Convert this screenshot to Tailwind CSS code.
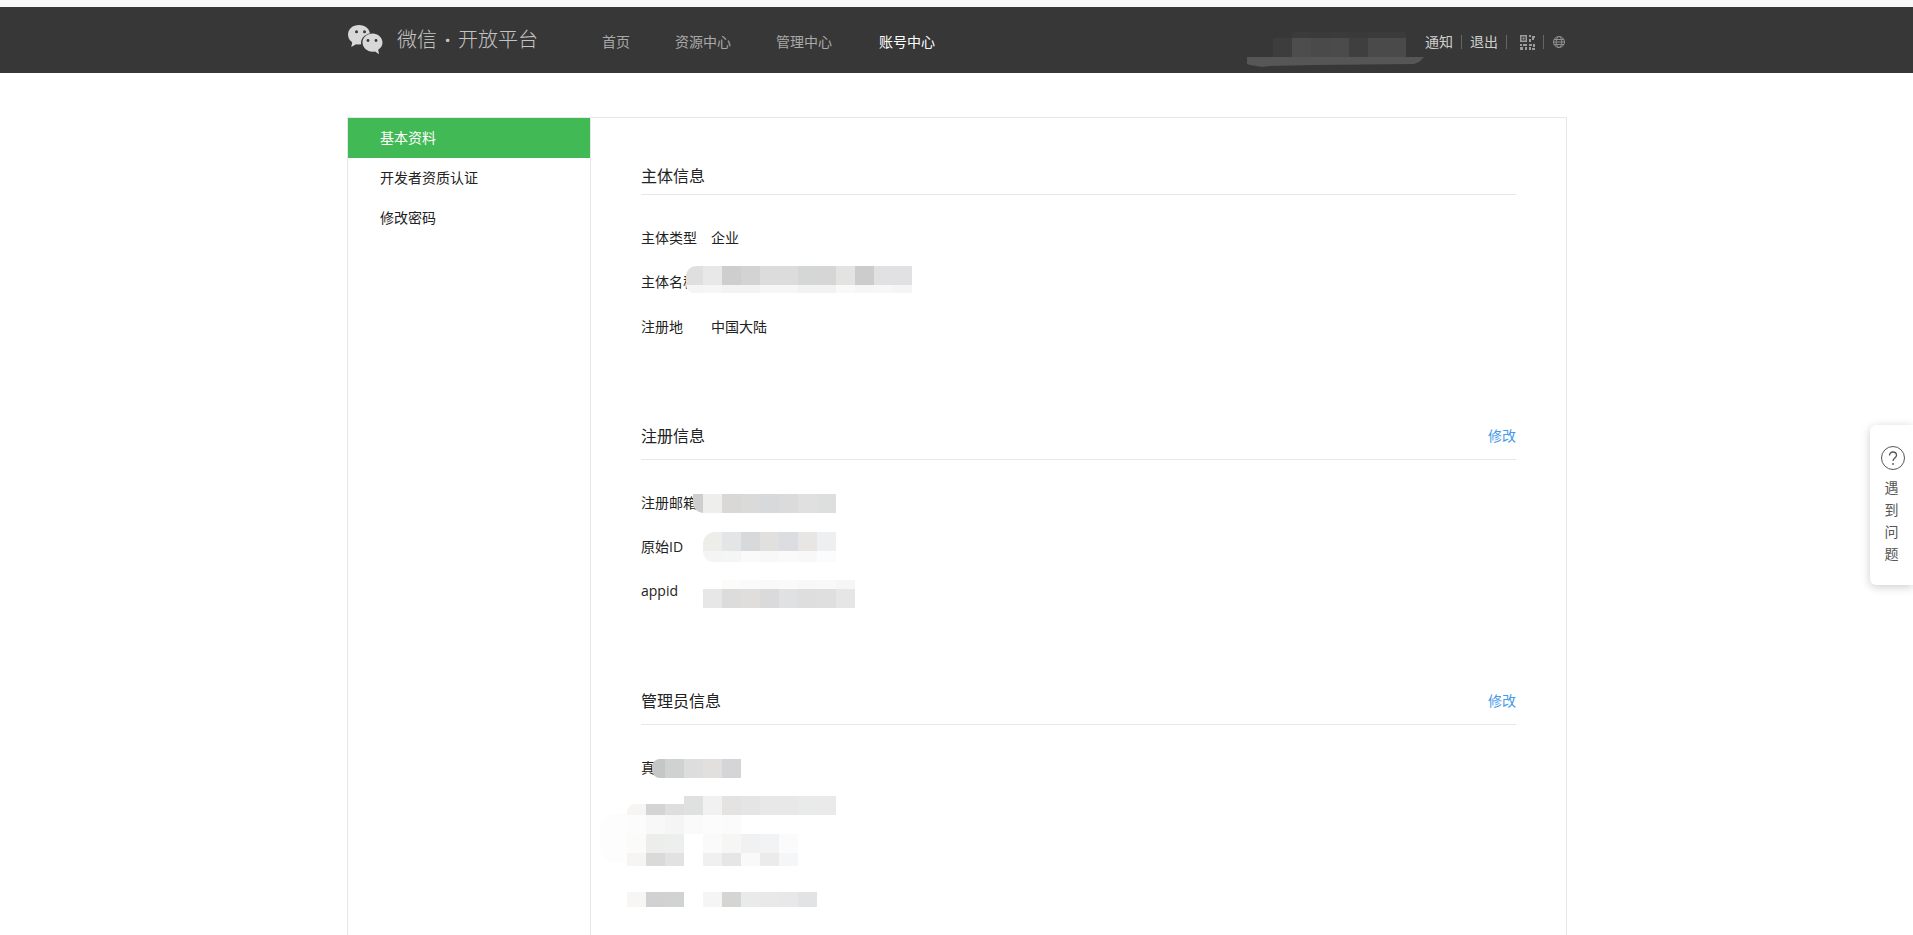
<!DOCTYPE html>
<html lang="zh-CN">

<head>
    <meta charset="UTF-8">
    <title>微信开放平台 - 基本资料</title>
    <script src="https://cdn.jsdelivr.net/npm/@tailwindcss/browser@4"></script>
</head>

<body class="relative h-[935px] overflow-hidden bg-white text-sm text-[#222] font-['Open_Sans','Noto_Sans_CJK_SC',sans-serif]">
    <div class="h-[7px] bg-[#f8f8f8]"></div>

    <!-- top bar -->
    <header class="relative h-[66px] bg-[#373737]">
        <div class="ml-[347px] w-[1220px] h-full flex items-center">
            <svg class="w-[36px] h-[30px]" viewBox="0 0 36 30">
                <path fill="#d8d8d8" d="M12 0C5.600 0 1 4.200 1 9.600c0 3.200 1.600 5.900 4.200 7.700L4.300 22l4.800-2.800c1 .2 1.900.3 2.900.3 6.200 0 11-4.300 11-9.900S18.200 0 12 0z" />
                <circle cx="9.500" cy="6.800" r="1.500" fill="#373737" />
                <circle cx="17.500" cy="6.800" r="1.500" fill="#373737" />
                <ellipse cx="25.500" cy="18" rx="11.500" ry="10" fill="#373737" />
                <path fill="#d8d8d8" d="M25.500 8.500c-5.500 0-10 4-10 9.100s4.500 9.100 10 9.100c.9 0 1.800-.1 2.600-.3l3.900 2.800-.8-4.400c2.600-1.600 4.300-4.200 4.300-7.200 0-5.100-4.500-9.100-10-9.100z" />
                <circle cx="21" cy="15.500" r="1.400" fill="#373737" />
                <circle cx="29" cy="15.500" r="1.400" fill="#373737" />
            </svg>
            <div class="ml-[14px] flex text-[20px] leading-[28px] text-[#c4c4c4] font-light">
                <span>微信</span>
                <span class="w-[21px] text-center font-bold">·</span>
                <span>开放平台</span>
            </div>
            <nav class="ml-[64px] mt-[3px] flex gap-[45px] text-[#a9a9a9]">
                <a>首页</a>
                <a>资源中心</a>
                <a>管理中心</a>
                <a class="ml-[2px] text-white">账号中心</a>
            </nav>
            <div class="ml-auto mt-[4px] pr-[2px] flex items-center text-[#cfcfcf]">
                <a>通知</a>
                <span class="mx-[8px] w-px h-[14px] bg-[#666]"></span>
                <a>退出</a>
                <span class="ml-[8px] mr-[13px] w-px h-[14px] bg-[#666]"></span>
                <svg class="w-[15px] h-[15px]" viewBox="0 0 15 15" fill="#9c9c9c">
                    <path fill-rule="evenodd" d="M0 0h7v7H0zM1.500 1.500v4h4v-4z" />
                    <path d="M2.500 2.500h2v2h-2z" />
                    <path d="M9 0h2v2H9zM12 1h3v2h-1v2h-2zM9 4h2v3H9z" />
                    <path d="M0 9h2v2H0zM3 9h4v2H3zM0 12h3v3H0zM5 12h2v3H5z" />
                    <path d="M9 9h3v2H9zM13 9h2v3h-2zM9 12h2v3H9zM12 13h3v2h-3z" />
                </svg>
                <span class="mx-[8px] w-px h-[14px] bg-[#666]"></span>
                <svg class="ml-[1px] w-[12px] h-[12px]" viewBox="0 0 12 12" fill="none" stroke="#8f8f8f" stroke-width="1">
                    <circle cx="6" cy="6" r="5.500" />
                    <ellipse cx="6" cy="6" rx="2.800" ry="5.500" />
                    <path d="M1 3.500h10M.5 6h11M1 8.500h10" />
                </svg>
            </div>
        </div>

        <!-- blurred account name -->
        <div class="absolute left-[1273px] top-[25px] flex flex-col">
            <div class="flex h-[6px] *:w-[19px]">
                <i class="bg-[#373737]"></i><i class="bg-[#3b3b3b]"></i><i class="bg-[#3a3a3a]"></i><i class="bg-[#3b3b3b]"></i><i class="bg-[#3a3a3a]"></i><i class="bg-[#3b3b3b]"></i><i class="bg-[#3b3b3b]"></i>
            </div>
            <div class="flex h-[19px] *:w-[19px]">
                <i class="bg-[#3d3d3d]"></i><i class="bg-[#4d4d4d]"></i><i class="bg-[#4a4a4a]"></i><i class="bg-[#4b4b4b]"></i><i class="bg-[#3f3f3f]"></i><i class="bg-[#4a4a4a]"></i><i class="bg-[#4a4a4a]"></i>
            </div>
        </div>
        <svg class="absolute left-[1247px] top-[50px] w-[177px] h-[10px]" viewBox="0 0 177 10">
            <path fill="#565656" d="M0 0h177l-5 5-5 2-100 1-44 1-8 1-12-2-6-2z" />
        </svg>
    </header>

    <!-- account panel -->
    <div class="mt-[44px] ml-[347px] w-[1220px] h-[1000px] flex border border-[#e7e7eb]">
        <aside class="w-[243px] shrink-0 border-r border-[#e7e7eb]">
            <a class="flex h-[40px] items-center pl-[32px] bg-[#41b955] text-white">基本资料</a>
            <a class="flex h-[40px] items-center pl-[32px]">开发者资质认证</a>
            <a class="flex h-[40px] items-center pl-[32px]">修改密码</a>
        </aside>

        <main class="flex-1 px-[50px] pt-[40px]">
            <section>
                <div class="flex h-[37px] items-center border-b border-[#e7e7eb] text-base">主体信息</div>
                <div class="pt-[21px]">
                    <div class="flex h-[44px] items-center"><span class="w-[70px]">主体类型</span><span>企业</span></div>
                    <div class="relative flex h-[44px] items-center">
                        <span class="w-[70px]">主体名称</span>
                        <div class="absolute left-[45px] top-[6px]">
                            <div class="flex h-[19px] *:w-[19px]">
                                <i class="!w-[17px] bg-[#dfdfdf] rounded-tl-[10px]"></i><i class="bg-[#e8e8e8]"></i><i class="bg-[#cecece]"></i><i class="bg-[#d3d3d3]"></i><i class="bg-[#dcdcdc]"></i><i class="bg-[#dcdcdc]"></i><i class="bg-[#d5d7d6]"></i><i class="bg-[#d6d6d6]"></i><i class="bg-[#e3e3e1]"></i><i class="bg-[#cccccc]"></i><i class="bg-[#e1e1e3]"></i><i class="bg-[#e1e1e3]"></i>
                            </div>
                            <div class="flex h-[8px] *:w-[19px]">
                                <i class="!w-[17px] bg-[#f5f5f5] rounded-bl-[8px]"></i><i class="bg-[#f6f6f6]"></i><i class="bg-[#f3f3f3]"></i><i class="bg-[#f3f3f3]"></i><i class="bg-[#f6f6f6]"></i><i class="bg-[#f6f6f6]"></i><i class="bg-[#f2f2f2]"></i><i class="bg-[#f2f2f2]"></i><i class="bg-[#f9f9f9]"></i><i class="bg-[#f6f6f6]"></i><i class="bg-[#f7f7f7]"></i><i class="bg-[#f5f5f5]"></i>
                            </div>
                        </div>
                    </div>
                    <div class="flex h-[46px] items-center"><span class="w-[70px]">注册地</span><span>中国大陆</span></div>
                </div>
            </section>

            <section class="mt-[63px]">
                <div class="flex h-[47px] items-center justify-between border-b border-[#e7e7eb]">
                    <span class="text-base">注册信息</span>
                    <a class="text-[#459ae9]">修改</a>
                </div>
                <div class="pt-[21px]">
                    <div class="relative flex h-[44px] items-center">
                        <span class="w-[70px]">注册邮箱</span>
                        <div class="absolute left-[52px] top-[13px] flex h-[19px] *:w-[19px]">
                            <i class="!w-[10px] bg-[#cecece] rounded-bl-[10px]"></i><i class="bg-[#eeeeec]"></i><i class="bg-[#d9d8d6]"></i><i class="bg-[#dadada]"></i><i class="bg-[#d8d9db]"></i><i class="bg-[#dbdbdb]"></i><i class="bg-[#e0e0e0]"></i><i class="bg-[#dddfdf]"></i>
                        </div>
                    </div>
                    <div class="relative flex h-[44px] items-center">
                        <span class="w-[70px]">原始ID</span>
                        <div class="absolute left-[62px] top-[7px]">
                            <div class="flex h-[19px] *:w-[19px]">
                                <i class="bg-[#edede9] rounded-tl-[12px]"></i><i class="bg-[#e4e5e7]"></i><i class="bg-[#d8d9db]"></i><i class="bg-[#e1e0de]"></i><i class="bg-[#dcdde0]"></i><i class="bg-[#e7e6e4]"></i><i class="bg-[#eeeff1]"></i>
                            </div>
                            <div class="flex h-[11px] *:w-[19px]">
                                <i class="bg-[#f4f4f4] rounded-bl-[10px]"></i><i class="bg-[#f5f5f5]"></i><i class="bg-[#fafafa]"></i><i class="bg-[#f8f8f8]"></i><i class="bg-[#fafafa]"></i><i class="bg-[#f8f8f8]"></i><i class="bg-[#fcfcfc]"></i>
                            </div>
                        </div>
                    </div>
                    <div class="relative flex h-[46px] items-center">
                        <span class="w-[70px] -mt-[3px]">appid</span>
                        <div class="absolute left-[62px] top-[11px]">
                            <div class="flex h-[9px] *:w-[19px]">
                                <i class="bg-white"></i><i class="bg-[#fcfcfa]"></i><i class="bg-[#fafafa]"></i><i class="bg-[#f9f9f9]"></i><i class="bg-[#fafafa]"></i><i class="bg-[#f8f8f8]"></i><i class="bg-[#f9f9f9]"></i><i class="bg-[#f6f6f6]"></i>
                            </div>
                            <div class="flex h-[19px] *:w-[19px]">
                                <i class="bg-[#e7e7e7]"></i><i class="bg-[#dcdcdc]"></i><i class="bg-[#dfdedc]"></i><i class="bg-[#dadada]"></i><i class="bg-[#e0e1e3]"></i><i class="bg-[#dedede]"></i><i class="bg-[#dfdfdf]"></i><i class="bg-[#e6e6e6]"></i>
                            </div>
                        </div>
                    </div>
                </div>
            </section>

            <section class="mt-[63px]">
                <div class="flex h-[47px] items-center justify-between border-b border-[#e7e7eb]">
                    <span class="text-base">管理员信息</span>
                    <a class="text-[#459ae9]">修改</a>
                </div>
                <div class="pt-[21px]">
                    <div class="relative flex h-[44px] items-center">
                        <span class="w-[70px]">真实姓名</span>
                        <div class="absolute left-[11px] top-[13px] flex h-[19px] *:w-[19px]">
                            <i class="!w-[13px] bg-[#c5c6c8] rounded-l-[8px]"></i><i class="bg-[#d0d1d1]"></i><i class="bg-[#dddddd]"></i><i class="bg-[#e1e0de]"></i><i class="bg-[#d5d5d7]"></i>
                        </div>
                    </div>
                    <div class="relative h-[88px]">
                        <div class="absolute -left-[41px] top-[23px] w-[30px] h-[50px] bg-[#fdfdfd] rounded-l-[16px]"></div>
                        <div class="absolute -left-[14px] top-[6px] flex">
                            <div class="pt-[8px]">
                                <div class="flex h-[11px] *:w-[19px]"><i class="bg-[#f6f5f3] rounded-tl-[8px]"></i><i class="bg-[#d4d4d5]"></i><i class="bg-[#dededf]"></i></div>
                                <div class="flex h-[19px] *:w-[19px]"><i class="bg-[#fcfcfc]"></i><i class="bg-[#f8f8f8]"></i><i class="bg-[#f5f5f5]"></i></div>
                                <div class="flex h-[19px] *:w-[19px]"><i class="bg-[#fbfbf9]"></i><i class="bg-[#edeeec]"></i><i class="bg-[#ecefee]"></i></div>
                                <div class="flex h-[13px] *:w-[19px]"><i class="bg-[#f6f5f3]"></i><i class="bg-[#dadada]"></i><i class="bg-[#e2e2e3]"></i></div>
                            </div>
                            <div>
                                <div class="flex h-[19px] *:w-[19px]"><i class="bg-[#dfe1e0]"></i><i class="bg-[#f1f1f1]"></i><i class="bg-[#e4e3e1]"></i><i class="bg-[#e5e5e6]"></i><i class="bg-[#e8e8e8]"></i><i class="bg-[#e8e8e8]"></i><i class="bg-[#e9eaea]"></i><i class="bg-[#eaeaea]"></i></div>
                                <div class="flex h-[19px] *:w-[19px]"><i class="bg-[#fafafa]"></i><i class="bg-[#fcfcfc]"></i><i class="bg-[#fbfbfb]"></i></div>
                                <div class="flex h-[19px] pl-[19px] *:w-[19px]"><i class="bg-[#fafafa]"></i><i class="bg-[#f6f6f5]"></i><i class="bg-[#f1f1f1]"></i><i class="bg-[#f2f3f5]"></i><i class="bg-[#fbfbfb]"></i></div>
                                <div class="flex h-[13px] pl-[19px] *:w-[19px]"><i class="bg-[#f0f0f1]"></i><i class="bg-[#e6e6e6]"></i><i class="bg-[#f9f9f9]"></i><i class="bg-[#ecebe9]"></i><i class="bg-[#f5f6f8]"></i></div>
                            </div>
                        </div>
                    </div>
                    <div class="relative flex h-[44px] items-center">
                        <span class="w-[70px]">微信号</span>
                        <div class="absolute -left-[14px] top-[14px] flex h-[15px] bg-white *:w-[19px]">
                            <i class="bg-[#f7f6f4]"></i><i class="bg-[#d1d1d3]"></i><i class="bg-[#d1d3d2]"></i><i class="bg-white"></i><i class="bg-[#f5f5f5]"></i><i class="bg-[#d5d5d3]"></i><i class="bg-[#e9ebeb]"></i><i class="bg-[#e9e9e9]"></i><i class="bg-[#e8e8ea]"></i><i class="bg-[#e2e3e5]"></i>
                        </div>
                    </div>
                </div>
            </section>
        </main>
    </div>

    <!-- floating help tab -->
    <div class="absolute left-[1870px] top-[425px] w-[43px] h-[160px] pt-[21px] flex flex-col items-center bg-white rounded-l-[6px] shadow-[0_2px_10px_rgba(0,0,0,0.2)] text-[#555]">
        <svg class="w-[24px] h-[24px] shrink-0 ml-[2px]" viewBox="0 0 24 24" fill="none" stroke="#555" stroke-width="1">
            <circle cx="12" cy="12" r="11.500" />
            <path stroke-width="1.300" d="M8.500 9.500c0-2.100 1.500-3.500 3.500-3.500s3.500 1.300 3.500 3.200c0 2.800-3.500 2.800-3.500 5.800" />
            <circle cx="12" cy="18" r="0.900" fill="#555" stroke="none" />
        </svg>
        <div class="mt-[7px] w-[14px] leading-[22px] text-center">遇到问题</div>
    </div>
</body>

</html>
